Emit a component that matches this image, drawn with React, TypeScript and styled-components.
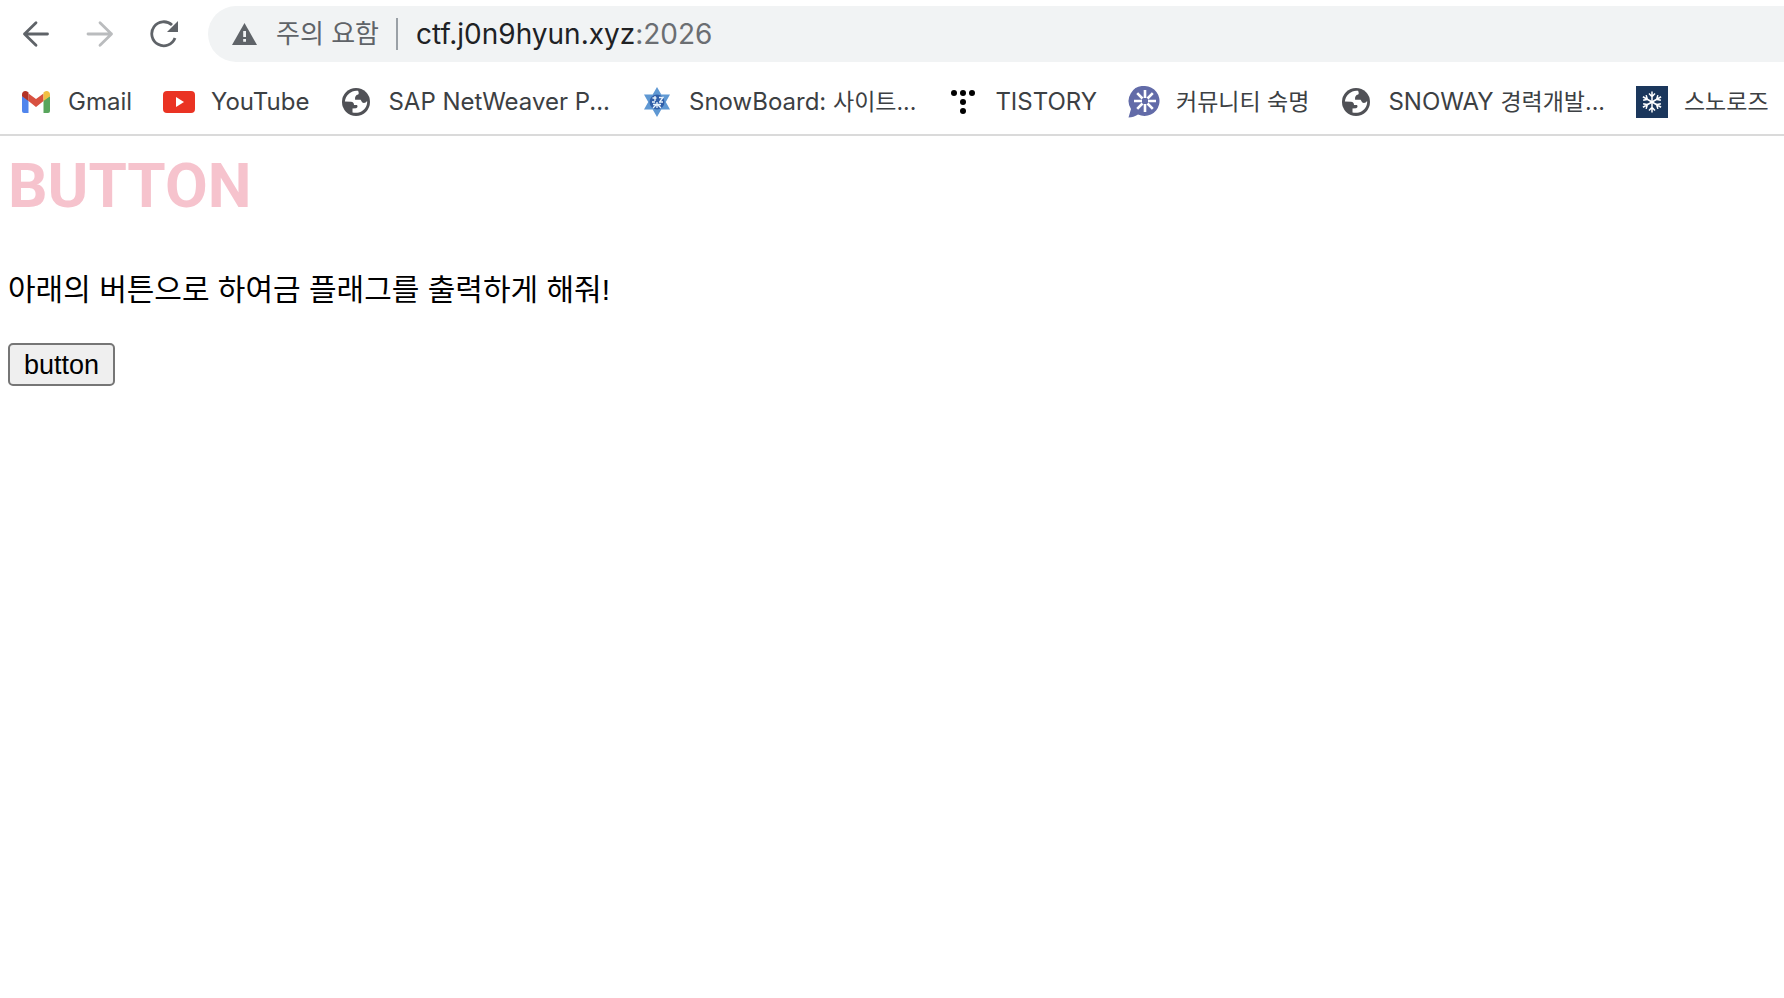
import React from "react";
import styled, { createGlobalStyle } from "styled-components";

const GlobalStyle = createGlobalStyle`
  * { box-sizing: border-box; }
  body {
    margin: 0;
    background: #fff;
    font-family: Inter, "Noto Sans CJK KR", sans-serif;
  }
`;

const Toolbar = styled.header`
  display: flex;
  align-items: center;
  height: 68px;
  padding: 6px 0 6px 16px;
`;

const NavButton = styled.button`
  display: flex;
  align-items: center;
  justify-content: center;
  flex: none;
  width: 40px;
  height: 40px;
  margin-right: 24px;
  padding: 0;
  border: 0;
  background: none;
  color: #5f6368;
  &:disabled { color: #babcbe; }
`;

const AddressBar = styled.div`
  display: flex;
  align-items: center;
  flex: 1;
  min-width: 0;
  height: 56px;
  padding-left: 24px;
  border-radius: 28px 0 0 28px;
  background: #f1f3f4;
`;

const SecurityChip = styled.button`
  display: flex;
  align-items: center;
  gap: 19px;
  height: 32px;
  padding: 0 17px 0 0;
  border: 0;
  border-right: 2px solid #9aa0a6;
  background: none;
  color: #5f6368;
  font: 400 26px/32px Inter, "Noto Sans CJK KR", sans-serif;
  white-space: nowrap;
`;

const Url = styled.a`
  padding-left: 18px;
  color: #202124;
  font-size: 28px;
  line-height: 32px;
  text-decoration: none;
`;

const Port = styled.span`
  color: #6b6e72;
`;

const Bookmarks = styled.nav`
  display: flex;
  align-items: center;
  gap: 31px;
  height: 68px;
  padding: 2px 20px 0;
  border-bottom: 2px solid #dadada;
`;

const Bookmark = styled.a`
  display: flex;
  align-items: center;
  flex: none;
  gap: 16px;
  color: #3c4043;
  font-size: 24px;
  line-height: 32px;
  text-decoration: none;
  white-space: nowrap;
`;

const Hangul = styled.span`
  font-size: 23px;
`;

const Page = styled.main`
  padding: 16px 8px;
`;

const Title = styled.h1`
  margin: 0;
  color: #f6c3cd;
  font: 700 62px/68px Roboto, sans-serif;
`;

const Message = styled.p`
  margin: 50px 0 33px;
  color: #000;
  font: 400 30px/40px "Liberation Sans", "Noto Sans CJK KR", sans-serif;
`;

const SubmitButton = styled.button`
  height: 43px;
  padding: 0 14px;
  border: 2px solid #767676;
  border-radius: 5px;
  background: #efefef;
  color: #000;
  font: 400 27px/32px "Liberation Sans", Arial, sans-serif;
`;

const BackIcon = () => (
  <svg width="28" height="28" viewBox="0 0 28 28" fill="none" stroke="currentColor" strokeWidth="2.8" strokeLinecap="round" strokeLinejoin="round">
    <path d="M25.500 14H2.500M14 2.800 2.500 14 14 25.200" />
  </svg>
);

const ForwardIcon = () => (
  <svg width="28" height="28" viewBox="0 0 28 28" fill="none" stroke="currentColor" strokeWidth="2.8" strokeLinecap="round" strokeLinejoin="round">
    <path d="M2 14h23.500M14 2.800 25.500 14 14 25.200" />
  </svg>
);

const ReloadIcon = () => (
  <svg width="28" height="28" viewBox="0 0 28 28">
    <path d="M25 18A12 12 0 1 1 22 5" fill="none" stroke="currentColor" strokeWidth="2.800" />
    <path d="M28 1v11h-11z" fill="currentColor" />
  </svg>
);

const WarningIcon = () => (
  <svg width="25" height="22" viewBox="0 0 25 22">
    <path d="M12.500 0 25 22H0z" fill="#5f6368" />
    <path d="M11.200 8h2.800v6h-2.800zM11.200 16h2.800v2.800h-2.800z" fill="#f1f3f4" />
  </svg>
);

const GmailIcon = () => (
  <svg width="32" height="32" viewBox="0 0 32 32">
    <path d="M2 10v15a2 2 0 0 0 2 2h4.500V14z" fill="#5085ed" />
    <path d="M30 10v15a2 2 0 0 1-2 2h-4.500V14z" fill="#58a55c" />
    <path d="M8.500 7.500 16 13l7.500-5.500V15L16 21l-7.500-6z" fill="#d85140" />
    <path d="M2 8.500c0-3.500 3.500-4.500 6-2.500l.5.500V15L2 10.300z" fill="#b33327" />
    <path d="M30 8.500c0-3.500-3.500-4.500-6-2.500l-.5.500V15l6.500-4.700z" fill="#f1bf42" />
  </svg>
);

const YouTubeIcon = () => (
  <svg width="32" height="32" viewBox="0 0 32 32">
    <rect y="5" width="32" height="22" rx="4" fill="#ea3323" />
    <path d="M13 11v10l8-5z" fill="#fff" />
  </svg>
);

const GlobeIcon = () => (
  <svg width="32" height="32" viewBox="0 0 32 32">
    <circle cx="16" cy="16" r="14" fill="#505156" />
    <path d="M18 4.800c-3-.6-6.500.4-8.800 2.700C6.500 9.800 5 12.700 4.900 15.500l6.100.2c2 .1 3 1.300 3 3.200h3c1 1.500.5 3-1 3.300l-3.500.3v3.900c5.500 1.500 11-1 13.600-6 1-2 1.200-3.800 1-5.400-1.300 2-3.500 2.600-5 1.300l-1.500-2.500h-5.500c-.5-3 .8-5 3-5.300 1-.1.700-2.300 0-3.700z" fill="#fff" />
  </svg>
);

const StarIcon = () => (
  <svg width="32" height="32" viewBox="0 0 32 32">
    <path d="m16 1 4.300 7.500H29L24.800 16l4.200 7.500h-8.700L16 31l-4.300-7.500H3L7.200 16 3 8.500h8.700z" fill="#5f98d3" />
    <circle cx="16" cy="16" r="7.500" fill="#315fa9" />
    <path d="M14 10v5M11.500 12h4M18 11.500h4l-3 4M11 16h3m4 0h4M12 18.500h8M16 16v6m-1-3-3 3m5-3 3 3" stroke="#e9f3fc" strokeWidth="1.300" fill="none" />
  </svg>
);

const TistoryIcon = () => (
  <svg width="32" height="32" viewBox="0 0 32 32">
    <circle cx="7" cy="7" r="3" /><circle cx="16" cy="7" r="3" /><circle cx="25" cy="7" r="3" />
    <circle cx="16" cy="16" r="3" /><circle cx="16" cy="25" r="3" />
  </svg>
);

const CommunityIcon = () => (
  <svg width="32" height="32" viewBox="0 0 32 32">
    <path d="M17 0a15 15 0 1 1-7 28.500C7 30.500 4 31.500.5 31.500L3 23A15 15 0 0 1 17 0z" fill="#626ba8" />
    <path d="M17 4v8m0 6v8M6 15h8m6 0h8M9.200 7.200l5.300 5.300m5 5 5.300 5.300m0-15.600-5.300 5.300m-5 5-5.300 5.300" stroke="#fff" strokeWidth="2.600" />
  </svg>
);

const SnowflakeIcon = () => (
  <svg width="32" height="32" viewBox="0 0 32 32">
    <path d="M0 0h32v32H0z" fill="#1b375c" />
    <g fill="none" stroke="#fff" strokeWidth="1.500">
      {[0, 60, 120, 180, 240, 300].map((angle) => (
        <path key={angle} d="M16 16V5.500M13 7.500l3 3.200 3-3.200" transform={`rotate(${angle} 16 16)`} />
      ))}
    </g>
  </svg>
);

const bookmarks = [
  { latin: "Gmail", Icon: GmailIcon },
  { latin: "YouTube", Icon: YouTubeIcon },
  { latin: "SAP NetWeaver P...", Icon: GlobeIcon },
  { latin: "SnowBoard: ", hangul: "사이트...", Icon: StarIcon },
  { latin: "TISTORY", Icon: TistoryIcon },
  { hangul: "커뮤니티 숙명", Icon: CommunityIcon },
  { latin: "SNOWAY ", hangul: "경력개발...", Icon: GlobeIcon },
  { hangul: "스노로즈", Icon: SnowflakeIcon },
];

export default function App() {
  return (
    <>
      <GlobalStyle />
      <Toolbar>
        <NavButton aria-label="Back"><BackIcon /></NavButton>
        <NavButton aria-label="Forward" disabled><ForwardIcon /></NavButton>
        <NavButton aria-label="Reload"><ReloadIcon /></NavButton>
        <AddressBar>
          <SecurityChip><WarningIcon />주의 요함</SecurityChip>
          <Url href="#">ctf.j0n9hyun.xyz<Port>:2026</Port></Url>
        </AddressBar>
      </Toolbar>
      <Bookmarks>
        {bookmarks.map(({ latin, hangul, Icon }) => (
          <Bookmark href="#" key={`${latin}${hangul}`}>
            <Icon />
            <span>{latin}{hangul && <Hangul>{hangul}</Hangul>}</span>
          </Bookmark>
        ))}
      </Bookmarks>
      <Page>
        <Title>BUTTON</Title>
        <Message>아래의 버튼으로 하여금 플래그를 출력하게 해줘!</Message>
        <SubmitButton>button</SubmitButton>
      </Page>
    </>
  );
}
